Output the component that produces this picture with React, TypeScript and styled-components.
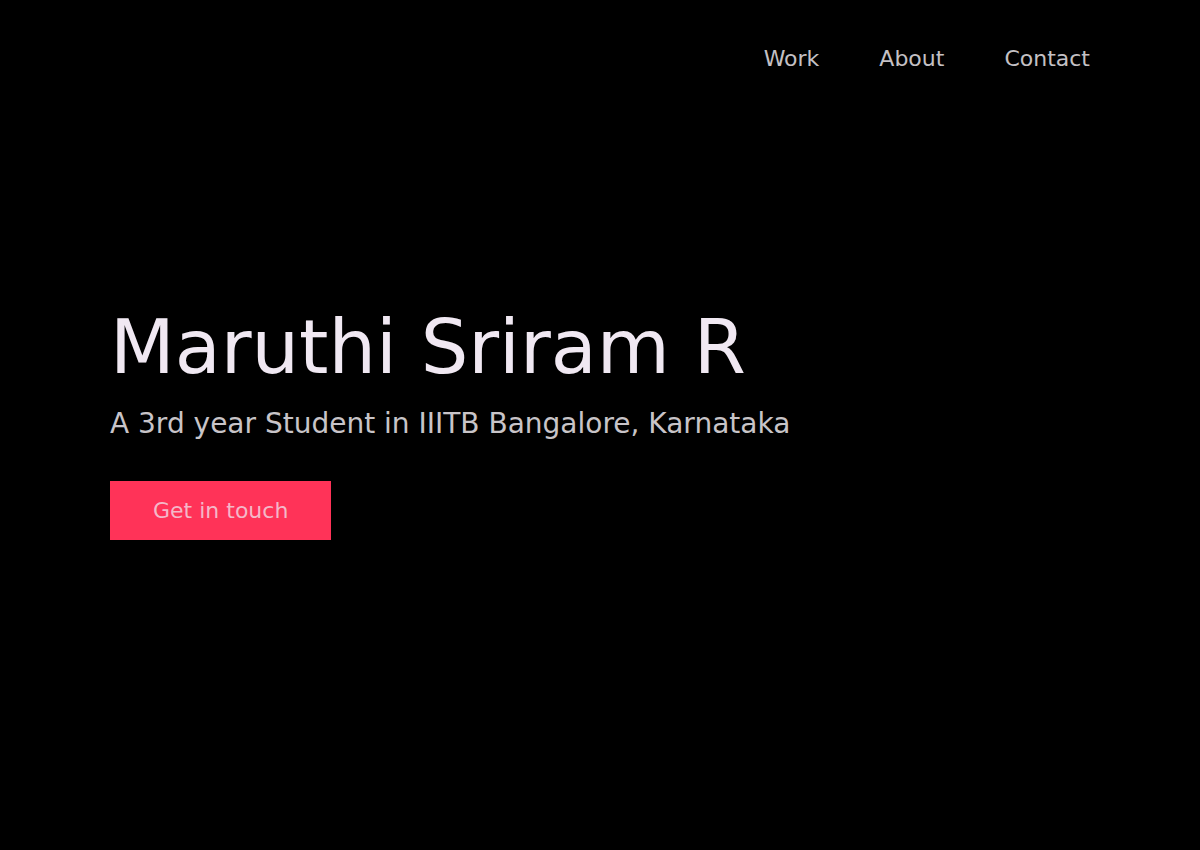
import React from "react";
import styled, { createGlobalStyle } from "styled-components";

const GlobalStyle = createGlobalStyle`
  html, body {
    margin: 0;
    padding: 0;
    background: #000;
  }
  body {
    font-family: "DejaVu Sans", "Liberation Sans", sans-serif;
  }
`;

const Page = styled.div`
  min-height: 850px;
  display: flex;
  flex-direction: column;
  background: #000;
`;

const Header = styled.header`
  display: flex;
  justify-content: flex-end;
  padding: 45px 110px 0;
`;

const Nav = styled.nav`
  display: flex;
  gap: 60px;
`;

const NavLink = styled.a`
  color: #c4c0c4;
  font-size: 22px;
  text-decoration: none;
  line-height: 28px;
`;

const Hero = styled.main`
  flex: 1;
  display: flex;
  flex-direction: column;
  align-items: flex-start;
  padding: 0 110px;
  margin-top: 231px;
`;

const Title = styled.h1`
  margin: 0;
  font-size: 75px;
  font-weight: 400;
  line-height: 1.15;
  color: #f0e8f2;
`;

const Subtitle = styled.p`
  margin: 17px 0 0;
  font-size: 28px;
  line-height: 1.2;
  color: #c8c4c8;
`;

const Button = styled.button`
  margin-top: 40px;
  background: #ff3358;
  color: #f4b8c8;
  border: none;
  font-family: inherit;
  font-size: 22px;
  line-height: 27px;
  padding: 16px 43px;
  cursor: pointer;
`;

export default function App() {
  return (
    <>
      <GlobalStyle />
      <Page>
        <Header>
          <Nav>
            <NavLink href="#">Work</NavLink>
            <NavLink href="#">About</NavLink>
            <NavLink href="#">Contact</NavLink>
          </Nav>
        </Header>
        <Hero>
          <Title>Maruthi Sriram R</Title>
          <Subtitle>A 3rd year Student in IIITB Bangalore, Karnataka</Subtitle>
          <Button>Get in touch</Button>
        </Hero>
      </Page>
    </>
  );
}
